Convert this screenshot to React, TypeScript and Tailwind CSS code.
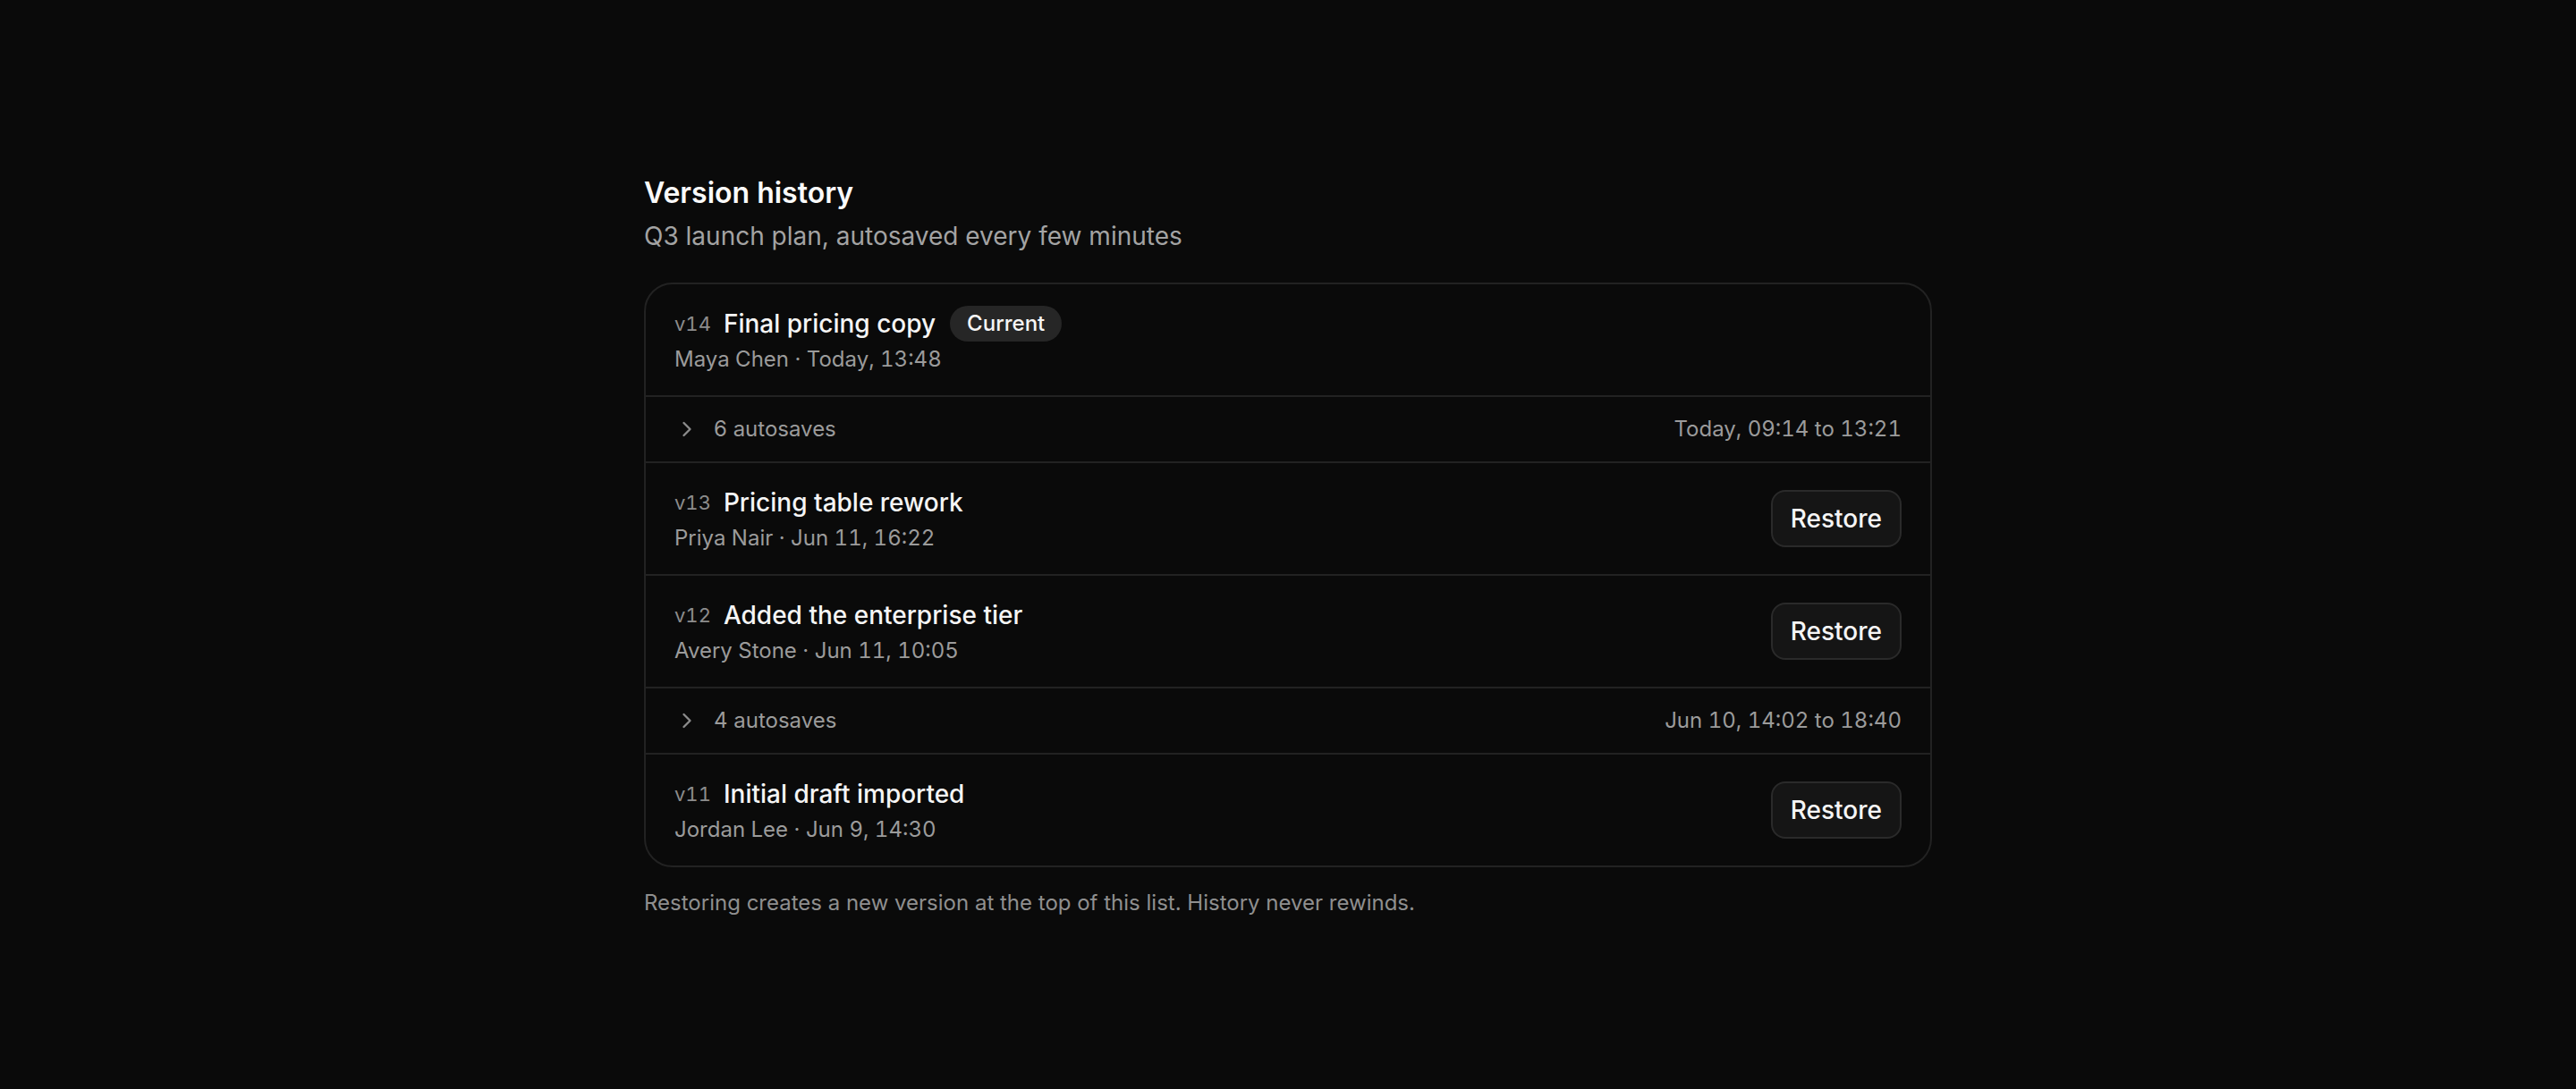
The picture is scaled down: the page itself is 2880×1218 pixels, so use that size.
import { ChevronRight } from 'lucide-react'

type VersionRow = {
  kind: 'version'
  label: string
  title: string
  author: string
  time: string
  current?: boolean
}

type AutosaveRow = {
  kind: 'autosave'
  count: number
  range: string
}

const rows: (VersionRow | AutosaveRow)[] = [
  { kind: 'version', label: 'v14', title: 'Final pricing copy', author: 'Maya Chen', time: 'Today, 13:48', current: true },
  { kind: 'autosave', count: 6, range: 'Today, 09:14 to 13:21' },
  { kind: 'version', label: 'v13', title: 'Pricing table rework', author: 'Priya Nair', time: 'Jun 11, 16:22' },
  { kind: 'version', label: 'v12', title: 'Added the enterprise tier', author: 'Avery Stone', time: 'Jun 11, 10:05' },
  { kind: 'autosave', count: 4, range: 'Jun 10, 14:02 to 18:40' },
  { kind: 'version', label: 'v11', title: 'Initial draft imported', author: 'Jordan Lee', time: 'Jun 9, 14:30' },
]

function Version({ row }: { row: VersionRow }) {
  return (
    <div className="flex items-center justify-between gap-8 px-8 py-6">
      <div className="min-w-0">
        <div className="flex items-center gap-3.5">
          <span className="text-[22px] leading-8 tabular-nums text-[#8c8c8c]">{row.label}</span>
          <span className="text-[28px] leading-[40px] font-medium text-[#f5f5f5]">{row.title}</span>
          {row.current && (
            <span className="ml-0.5 rounded-full bg-[#262626] px-[19px] py-1 text-[24px] leading-8 font-medium text-[#f5f5f5]">
              Current
            </span>
          )}
        </div>
        <div className="mt-1 text-[24px] leading-8 tabular-nums text-[#9b9b9b]">
          {row.author} · {row.time}
        </div>
      </div>
      {!row.current && (
        <button className="h-16 rounded-2xl border-2 border-[#2a2a2a] bg-[#151515] px-5 text-[28px] font-medium text-[#f5f5f5] hover:bg-[#1c1c1c]">
          Restore
        </button>
      )}
    </div>
  )
}

function Autosaves({ row }: { row: AutosaveRow }) {
  return (
    <button className="flex w-full items-center justify-between px-8 py-4 text-[24px] leading-10 text-[#9b9b9b]">
      <span className="flex items-center gap-4">
        <ChevronRight className="h-7 w-7 text-[#8c8c8c]" strokeWidth={2} />
        {row.count} autosaves
      </span>
      <span className="tabular-nums">{row.range}</span>
    </button>
  )
}

export default function App() {
  return (
    <div className="min-h-screen bg-[#0a0a0a] font-['Inter','Noto_Sans',sans-serif] text-white antialiased">
      <div className="mx-auto w-full max-w-[1440px] pt-48 pb-32">
        <h1 className="text-[32px] leading-[48px] font-semibold text-[#fafafa]">Version history</h1>
        <p className="mt-1 text-[28px] leading-[40px] text-[#a3a3a3]">Q3 launch plan, autosaved every few minutes</p>

        <div className="mt-8 divide-y-2 divide-[#222222] overflow-hidden rounded-[32px] border-2 border-[#222222] bg-[#0a0a0a]">
          {rows.map((row, i) =>
            row.kind === 'version' ? <Version key={i} row={row} /> : <Autosaves key={i} row={row} />
          )}
        </div>

        <p className="mt-6 text-[24px] leading-8 text-[#8f8f8f]">
          Restoring creates a new version at the top of this list. History never rewinds.
        </p>
      </div>
    </div>
  )
}
